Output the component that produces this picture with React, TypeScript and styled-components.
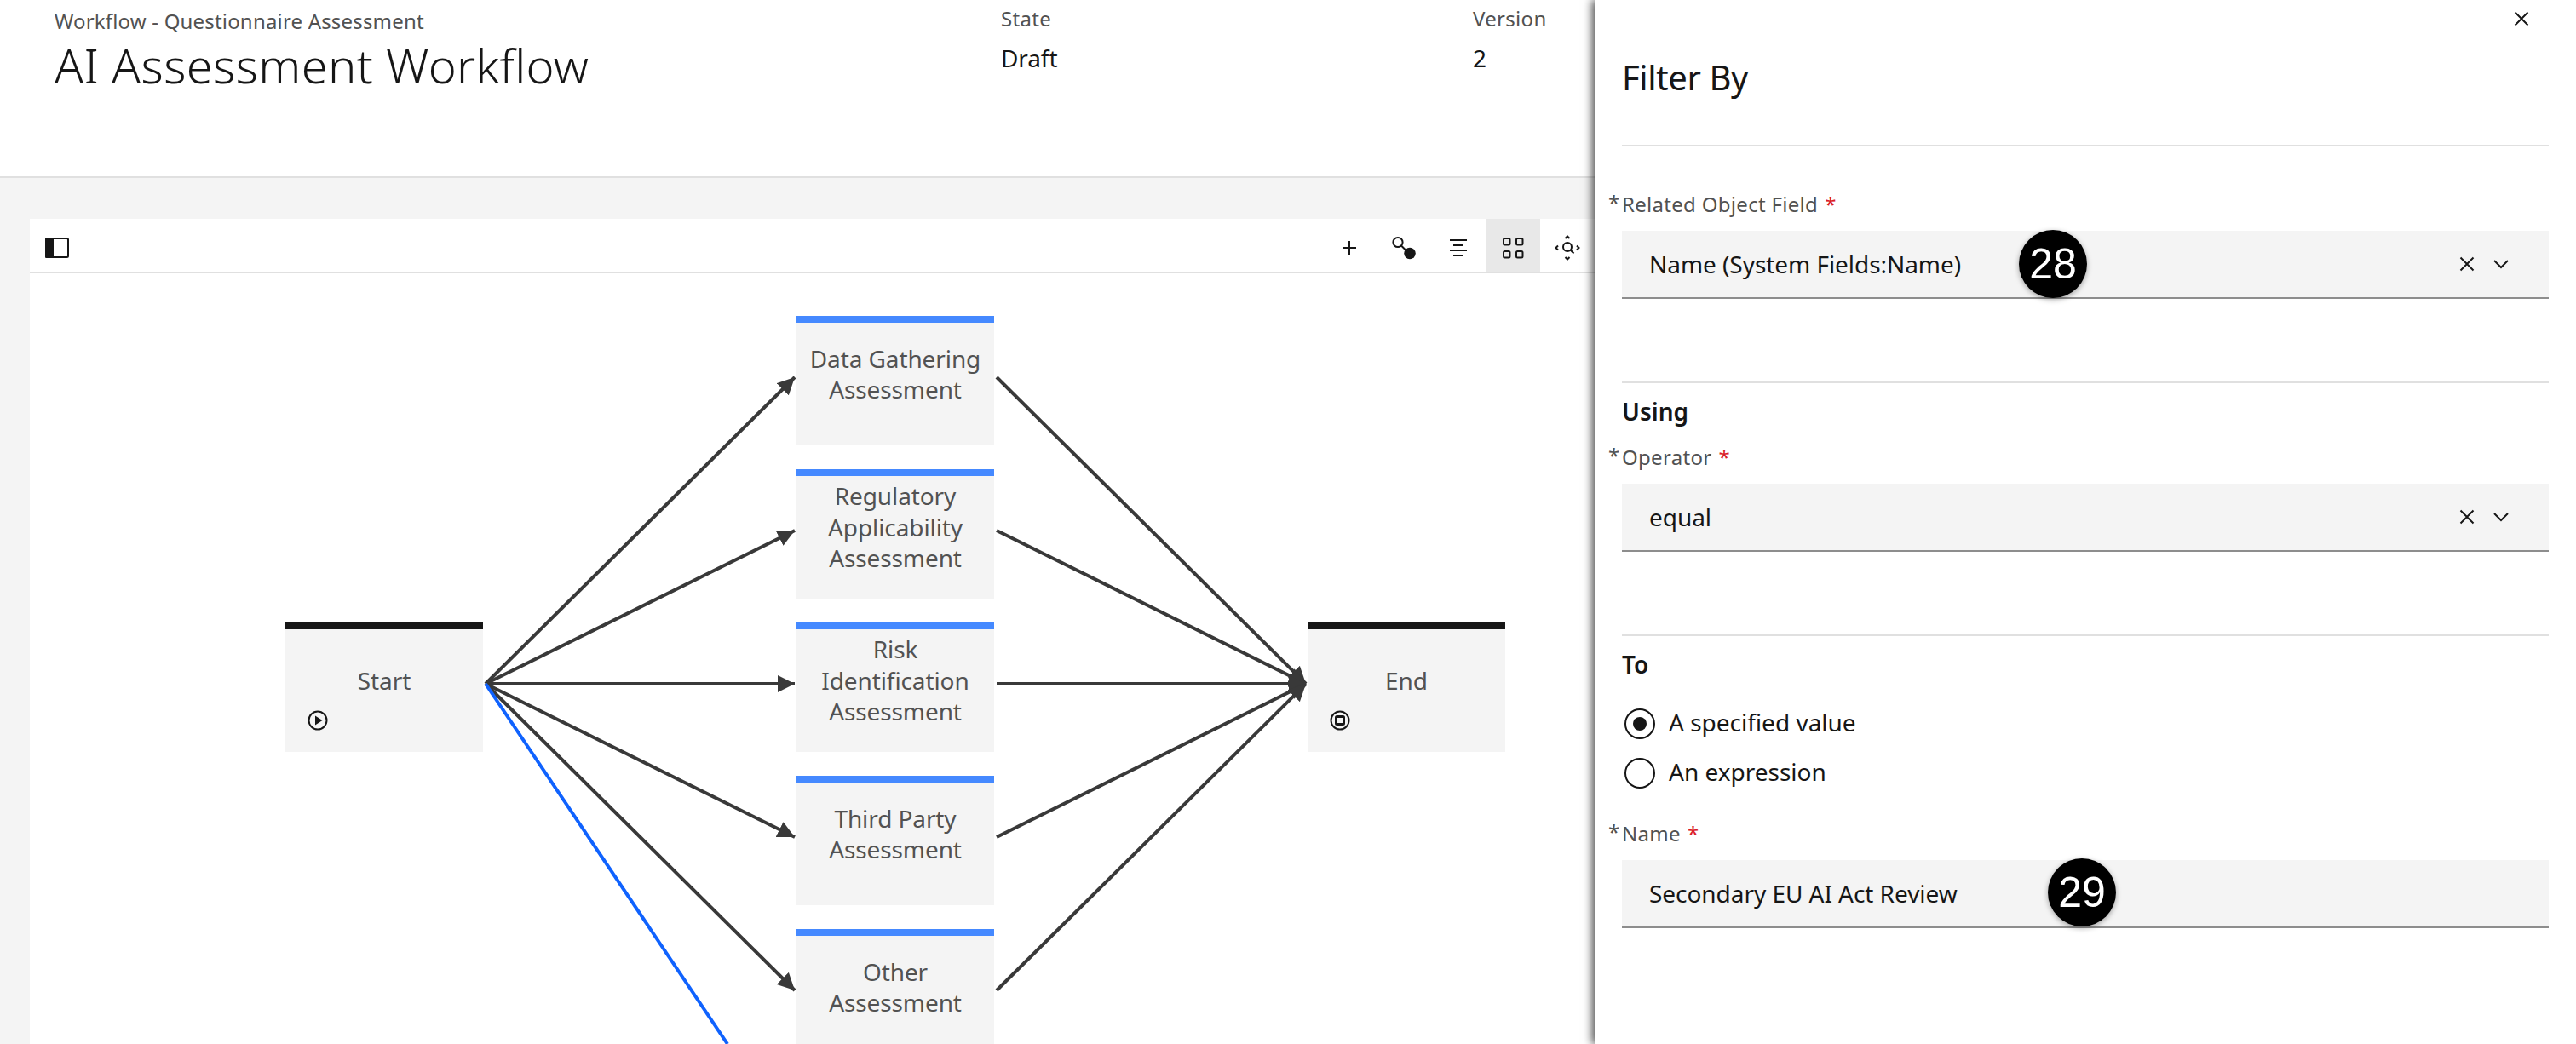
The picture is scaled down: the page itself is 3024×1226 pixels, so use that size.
import React from "react";
import styled, { createGlobalStyle } from "styled-components";

const GlobalStyle = createGlobalStyle`
  html, body {
    margin: 0;
    padding: 0;
    background: #ffffff;
  }
  body {
    font-family: "Noto Sans", "Open Sans", sans-serif;
    color: #161616;
  }
  * {
    box-sizing: border-box;
  }
`;

const processNodes = [
  "Data Gathering\nAssessment",
  "Regulatory\nApplicability\nAssessment",
  "Risk\nIdentification\nAssessment",
  "Third Party\nAssessment",
  "Other\nAssessment",
];

const EDGE_Y = processNodes.map((_, i) => 122 + i * 180);

function PanelIcon() {
  return (
    <svg width="32" height="32" viewBox="0 0 32 32">
      <rect x="3" y="5" width="26" height="22" rx="1.5" fill="none" stroke="#161616" strokeWidth="2" />
      <rect x="2" y="4" width="10" height="24" rx="1.5" fill="#161616" />
    </svg>
  );
}

function AddIcon() {
  return (
    <svg width="32" height="32" viewBox="0 0 32 32">
      <path d="M16 8v16M8 16h16" fill="none" stroke="#161616" strokeWidth="2" />
    </svg>
  );
}

function ConnectIcon() {
  return (
    <svg width="32" height="32" viewBox="0 0 32 32">
      <circle cx="9" cy="9.5" r="5.6" fill="none" stroke="#161616" strokeWidth="2" />
      <path d="M13 13.5l6 6" fill="none" stroke="#161616" strokeWidth="2" />
      <circle cx="23" cy="22.5" r="6.8" fill="#161616" />
    </svg>
  );
}

function AlignIcon() {
  return (
    <svg width="32" height="32" viewBox="0 0 32 32">
      <path d="M6 7h20M10 13h12M6 19h20M10 25h12" fill="none" stroke="#161616" strokeWidth="2" />
    </svg>
  );
}

function GridIcon() {
  return (
    <svg width="32" height="32" viewBox="0 0 32 32">
      <g fill="none" stroke="#161616" strokeWidth="2">
        <rect x="5" y="5" width="7.5" height="7.5" rx="1.5" />
        <rect x="20" y="5" width="7.5" height="7.5" rx="1.5" />
        <rect x="5" y="20" width="7.5" height="7.5" rx="1.5" />
        <rect x="20" y="20" width="7.5" height="7.5" rx="1.5" />
      </g>
    </svg>
  );
}

function FitIcon() {
  return (
    <svg width="32" height="32" viewBox="0 0 32 32">
      <g fill="none" stroke="#161616" strokeWidth="2">
        <circle cx="16" cy="15" r="5" />
        <path d="M19.5 18.5l4 4" />
        <path d="M13.5 5L16 2.5 18.5 5M13.5 27L16 29.5 18.5 27M5 13.5L2.5 16 5 18.5M27 13.5L29.5 16 27 18.5" />
      </g>
    </svg>
  );
}

function CloseIcon() {
  return (
    <svg width="18" height="18" viewBox="0 0 18 18">
      <path d="M1.5 1.5l15 15M16.5 1.5l-15 15" fill="none" stroke="#161616" strokeWidth="2" />
    </svg>
  );
}

function ChevronIcon() {
  return (
    <svg width="18" height="11" viewBox="0 0 18 11">
      <path d="M1 1l8 8 8-8" fill="none" stroke="#161616" strokeWidth="2" />
    </svg>
  );
}

function PlayIcon() {
  return (
    <svg width="24" height="24" viewBox="0 0 24 24">
      <circle cx="12" cy="12" r="10.5" fill="none" stroke="#161616" strokeWidth="2" />
      <path d="M9 6.5v11l8.5-5.5z" fill="#161616" />
    </svg>
  );
}

function StopIcon() {
  return (
    <svg width="24" height="24" viewBox="0 0 24 24">
      <circle cx="12" cy="12" r="10.5" fill="none" stroke="#161616" strokeWidth="2" />
      <rect x="7.5" y="7.5" width="9" height="9" rx="1" fill="none" stroke="#161616" strokeWidth="3" />
    </svg>
  );
}

function Edges() {
  return (
    <EdgeLayer viewBox="0 0 1837 905">
      <defs>
        <marker id="arrow" markerUnits="userSpaceOnUse" markerWidth="22" markerHeight="22" refX="20" refY="10" orient="auto">
          <path d="M0 0L20 10L0 20z" fill="#393939" />
        </marker>
      </defs>
      <g stroke="#393939" strokeWidth="4" fill="none">
        {EDGE_Y.map((y) => (
          <line key={`in-${y}`} x1="535" y1="482" x2="898" y2={y} markerEnd="url(#arrow)" />
        ))}
        {EDGE_Y.map((y) => (
          <line key={`out-${y}`} x1="1135" y1={y} x2="1498" y2="482" markerEnd="url(#arrow)" />
        ))}
      </g>
      <line x1="535" y1="482" x2="819" y2="905" stroke="#0f62fe" strokeWidth="4" />
    </EdgeLayer>
  );
}

function SelectField(props: { label: string; value: string; clearable?: boolean; badge?: string; badgeLeft?: number; badgeTop?: number; labelTop: number }) {
  return (
    <>
      <FieldLabel $top={props.labelTop}>
        <Star>*</Star>
        {props.label}
        <Required>*</Required>
      </FieldLabel>
      <FieldBox>
        <FieldValue>{props.value}</FieldValue>
        {props.clearable && (
          <FieldActions>
            <CloseIcon />
            <ChevronIcon />
          </FieldActions>
        )}
        {props.badge && (
          <Badge $left={props.badgeLeft || 0} $top={props.badgeTop || 0}>
            {props.badge}
          </Badge>
        )}
      </FieldBox>
    </>
  );
}

export default function App() {
  return (
    <Page>
      <GlobalStyle />
      <Main>
        <Header>
          <TitleBlock>
            <Eyebrow>Workflow - Questionnaire Assessment</Eyebrow>
            <Title>AI Assessment Workflow</Title>
          </TitleBlock>
          <MetaBlock>
            <MetaLabel>State</MetaLabel>
            <MetaValue>Draft</MetaValue>
          </MetaBlock>
          <MetaBlock>
            <MetaLabel>Version</MetaLabel>
            <MetaValue>2</MetaValue>
          </MetaBlock>
        </Header>
        <Workspace>
          <Canvas>
            <Toolbar>
              <ToolButton>
                <PanelIcon />
              </ToolButton>
              <ToolGroup>
                <ToolButton>
                  <AddIcon />
                </ToolButton>
                <ToolButton>
                  <ConnectIcon />
                </ToolButton>
                <ToolButton>
                  <AlignIcon />
                </ToolButton>
                <ToolButton $active>
                  <GridIcon />
                </ToolButton>
                <ToolButton>
                  <FitIcon />
                </ToolButton>
              </ToolGroup>
            </Toolbar>
            <Diagram>
              <Edges />
              <Node $x={300} $y={410} $stripe="#161616">
                <NodeLabel>Start</NodeLabel>
                <NodeIcon>
                  <PlayIcon />
                </NodeIcon>
              </Node>
              {processNodes.map((label, i) => (
                <Node key={label} $x={900} $y={50 + i * 180} $stripe="#4589ff">
                  <NodeLabel>{label}</NodeLabel>
                </Node>
              ))}
              <Node $x={1500} $y={410} $stripe="#161616">
                <NodeLabel>End</NodeLabel>
                <NodeIcon>
                  <StopIcon />
                </NodeIcon>
              </Node>
            </Diagram>
          </Canvas>
        </Workspace>
      </Main>
      <Panel>
        <CloseRow>
          <CloseIcon />
        </CloseRow>
        <PanelTitle>Filter By</PanelTitle>
        <Divider $top={54} />
        <SelectField labelTop={52} label="Related Object Field" value="Name (System Fields:Name)" clearable badge="28" badgeLeft={466} badgeTop={-1} />
        <Divider $top={97} />
        <SectionTitle $top={15}>Using</SectionTitle>
        <SelectField labelTop={20} label="Operator" value="equal" clearable />
        <Divider $top={97} />
        <SectionTitle $top={15}>To</SectionTitle>
        <RadioGroup>
          <RadioRow>
            <Radio $checked />
            <RadioText>A specified value</RadioText>
          </RadioRow>
          <RadioRow>
            <Radio />
            <RadioText>An expression</RadioText>
          </RadioRow>
        </RadioGroup>
        <SelectField labelTop={37} label="Name" value="Secondary EU AI Act Review" badge="29" badgeLeft={500} badgeTop={-2} />
      </Panel>
    </Page>
  );
}

const Page = styled.div`
  display: flex;
  width: 3024px;
  height: 1226px;
  overflow: hidden;
`;

const Main = styled.div`
  display: flex;
  flex-direction: column;
  width: 1872px;
  flex-shrink: 0;
`;

const Header = styled.header`
  display: grid;
  grid-template-columns: 1111px 554px 1fr;
  height: 209px;
  padding-left: 64px;
  border-bottom: 2px solid #e0e0e0;
`;

const TitleBlock = styled.div`
  padding-top: 9px;
`;

const Eyebrow = styled.div`
  font-size: 24px;
  line-height: 32px;
  letter-spacing: 0.18px;
  color: #525252;
`;

const Title = styled.h1`
  margin: 3px 0 0;
  font-size: 56px;
  line-height: 64px;
  font-weight: 300;
  letter-spacing: 0.36px;
  color: #161616;
`;

const MetaBlock = styled.div`
  padding-top: 6px;
`;

const MetaLabel = styled.div`
  font-size: 24px;
  line-height: 32px;
  letter-spacing: 0.3px;
  color: #525252;
`;

const MetaValue = styled.div`
  margin-top: 12px;
  font-size: 28px;
  line-height: 36px;
  letter-spacing: -0.1px;
  color: #161616;
`;

const Workspace = styled.div`
  flex: 1;
  display: flex;
  min-height: 0;
  padding: 48px 0 0 35px;
  background: #f4f4f4;
`;

const Canvas = styled.div`
  flex: 1;
  display: flex;
  flex-direction: column;
  background: #ffffff;
`;

const Toolbar = styled.div`
  display: flex;
  justify-content: space-between;
  height: 64px;
  border-bottom: 2px solid #e0e0e0;
`;

const ToolGroup = styled.div`
  display: flex;
`;

const ToolButton = styled.div<{ $active?: boolean }>`
  display: flex;
  align-items: center;
  justify-content: center;
  width: 64px;
  height: 62px;
  padding-top: 6px;
  background: ${(p) => (p.$active ? "#e8e8e8" : "transparent")};
`;

const Diagram = styled.div`
  position: relative;
  flex: 1;
  overflow: hidden;
`;

const EdgeLayer = styled.svg`
  position: absolute;
  left: 0;
  top: 0;
  width: 1837px;
  height: 905px;
  z-index: 1;
`;

const Node = styled.div<{ $x: number; $y: number; $stripe: string }>`
  position: absolute;
  left: ${(p) => p.$x}px;
  top: ${(p) => p.$y}px;
  width: 232px;
  height: 152px;
  background: #f4f4f4;
  border-top: 8px solid ${(p) => p.$stripe};
`;

const NodeLabel = styled.div`
  display: flex;
  align-items: center;
  justify-content: center;
  height: 122px;
  padding-bottom: 2px;
  font-size: 28px;
  line-height: 36.5px;
  letter-spacing: -0.1px;
  color: #525252;
  text-align: center;
  white-space: pre-line;
`;

const NodeIcon = styled.div`
  position: absolute;
  left: 26px;
  top: 95px;
  display: flex;
`;

const Panel = styled.aside`
  position: relative;
  z-index: 2;
  display: flex;
  flex-direction: column;
  flex: 1;
  padding: 0 32px;
  background: #ffffff;
  box-shadow: -3px 0 10px rgba(0, 0, 0, 0.7);
`;

const CloseRow = styled.div`
  display: flex;
  align-items: center;
  justify-content: flex-end;
  height: 44px;
  padding-right: 23px;
`;

const PanelTitle = styled.h2`
  margin: 22px 0 0;
  font-size: 40px;
  line-height: 50px;
  font-weight: 400;
  letter-spacing: -0.4px;
  color: #161616;
`;

const Divider = styled.div<{ $top: number }>`
  height: 2px;
  margin-top: ${(p) => p.$top}px;
  background: #e0e0e0;
`;

const SectionTitle = styled.div<{ $top: number }>`
  margin-top: ${(p) => p.$top}px;
  font-size: 28px;
  line-height: 36px;
  font-weight: 600;
  color: #161616;
`;

const FieldLabel = styled.label<{ $top: number }>`
  position: relative;
  display: block;
  margin: ${(p) => p.$top}px 0 15px;
  font-size: 24px;
  line-height: 32px;
  letter-spacing: 0.3px;
  color: #525252;
`;

const Star = styled.span`
  position: absolute;
  left: -16px;
  top: -2px;
  color: #525252;
`;

const Required = styled.span`
  margin-left: 8px;
  color: #da1e28;
`;

const FieldBox = styled.div`
  position: relative;
  display: flex;
  align-items: center;
  justify-content: space-between;
  height: 80px;
  padding: 0 32px;
  background: #f4f4f4;
  border-bottom: 2px solid #8d8d8d;
`;

const FieldValue = styled.span`
  font-size: 28px;
  line-height: 36px;
  letter-spacing: -0.05px;
  color: #161616;
`;

const FieldActions = styled.div`
  display: flex;
  align-items: center;
  gap: 22px;
  margin-right: 15px;
`;

const Badge = styled.div<{ $left: number; $top: number }>`
  position: absolute;
  left: ${(p) => p.$left}px;
  top: ${(p) => p.$top}px;
  display: flex;
  align-items: center;
  justify-content: center;
  width: 80px;
  height: 80px;
  border-radius: 50%;
  background: #000000;
  box-shadow: 0 2px 6px rgba(0, 0, 0, 0.35);
  color: #ffffff;
  font-family: "Liberation Sans", Arial, sans-serif;
  font-size: 50px;
`;

const RadioGroup = styled.div`
  display: flex;
  flex-direction: column;
  gap: 22px;
  margin-top: 34px;
`;

const RadioRow = styled.div`
  display: flex;
  align-items: center;
  gap: 16px;
  height: 36px;
  padding-left: 3px;
`;

const RadioText = styled.span`
  margin-top: -5px;
  font-size: 28px;
  color: #161616;
`;

const Radio = styled.span<{ $checked?: boolean }>`
  position: relative;
  width: 36px;
  height: 36px;
  border: 2px solid #161616;
  border-radius: 50%;

  &::after {
    content: "";
    display: ${(p) => (p.$checked ? "block" : "none")};
    position: absolute;
    left: 8px;
    top: 8px;
    width: 16px;
    height: 16px;
    border-radius: 50%;
    background: #161616;
  }
`;
